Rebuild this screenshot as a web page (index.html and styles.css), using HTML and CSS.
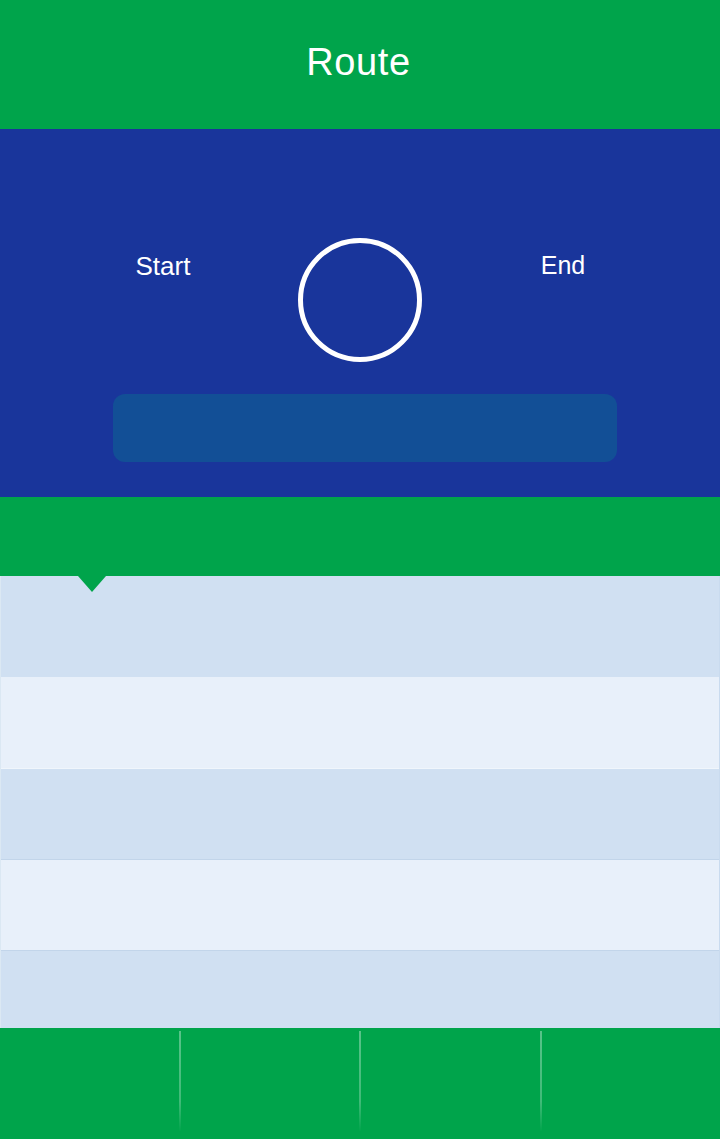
FILE: index.html
```html
<!DOCTYPE html>
<html>
<head>
<meta charset="utf-8">
<link rel="stylesheet" href="styles.css">
</head>
<body>
<div class="app">
  <header class="topbar"><h1 class="title">Route</h1></header>
  <section class="route">
    <div class="points">
      <div class="label">Start</div>
      <div class="ring"></div>
      <div class="label">End</div>
    </div>
    <div class="field"></div>
  </section>
  <section class="tabs">
    <span class="pointer"></span>
  </section>
  <ul class="rows">
    <li class="row row-a row-first"></li>
    <li class="row row-b row-second"></li>
    <li class="row row-a"></li>
    <li class="row row-b"></li>
    <li class="row row-a row-last"></li>
  </ul>
  <nav class="bottombar">
    <div class="cell"></div>
    <div class="cell"></div>
    <div class="cell"></div>
    <div class="cell"></div>
  </nav>
</div>
</body>
</html>
```

FILE: styles.css
```css
* { box-sizing: border-box; margin: 0; padding: 0; }
html, body { width: 720px; height: 1139px; overflow: hidden; }
body { font-family: "Liberation Sans", Arial, sans-serif; color: #fff; background: #00a44b; }
.app { display: flex; flex-direction: column; height: 1139px; }

.topbar { height: 129px; background: #00a44b; display: flex; align-items: center; justify-content: center; }
.title { font-weight: normal; font-size: 38px; letter-spacing: 0.6px; line-height: 1; margin-top: -6px; margin-left: -3px; }

.route { height: 368px; background: #19359b; padding: 109px 0 0; display: flex; flex-direction: column; }
.points { width: 100%; display: grid; grid-template-columns: 270px 124px 1fr; padding: 0 16px 0 28px; }
.label { text-align: center; font-size: 25px; line-height: 1; margin-top: 15px; }
.label:first-child { font-size: 26px; }
.ring { width: 124px; height: 124px; border: 5px solid #fff; border-radius: 50%; }
.field { margin: 32px 0 0 113px; width: 504px; height: 68px; background: #124f96; border-radius: 12px; }

.tabs { height: 79px; background: #00a44b; position: relative; }
.pointer { position: absolute; left: 78px; top: 79px; width: 0; height: 0; border-left: 14px solid transparent; border-right: 14px solid transparent; border-top: 16px solid #00a44b; z-index: 2; }

.rows { list-style: none; display: flex; flex-direction: column; border-left: 1px solid #dbe8f3; border-right: 1px solid #c9dbef; }
.row { height: 91px; border-bottom: 1px solid #c2d5ea; }
.row-first { height: 101px; border-bottom: none; }
.row-second { height: 92px; border-bottom-color: #f0f6fc; }
.row-a { background: #d0e0f2; }
.row-b { background: #e8f0fa; }
.row-last { height: 77px; border-bottom: none; }

.bottombar { flex: 1; background: #00a44b; display: flex; padding-top: 3px; }
.cell { flex: 1; height: 100px; }
.cell + .cell { border-left: 2px solid; border-image: linear-gradient(to bottom, rgba(255,255,255,0.35), rgba(255,255,255,0.25) 70%, rgba(255,255,255,0)) 1; }
```
